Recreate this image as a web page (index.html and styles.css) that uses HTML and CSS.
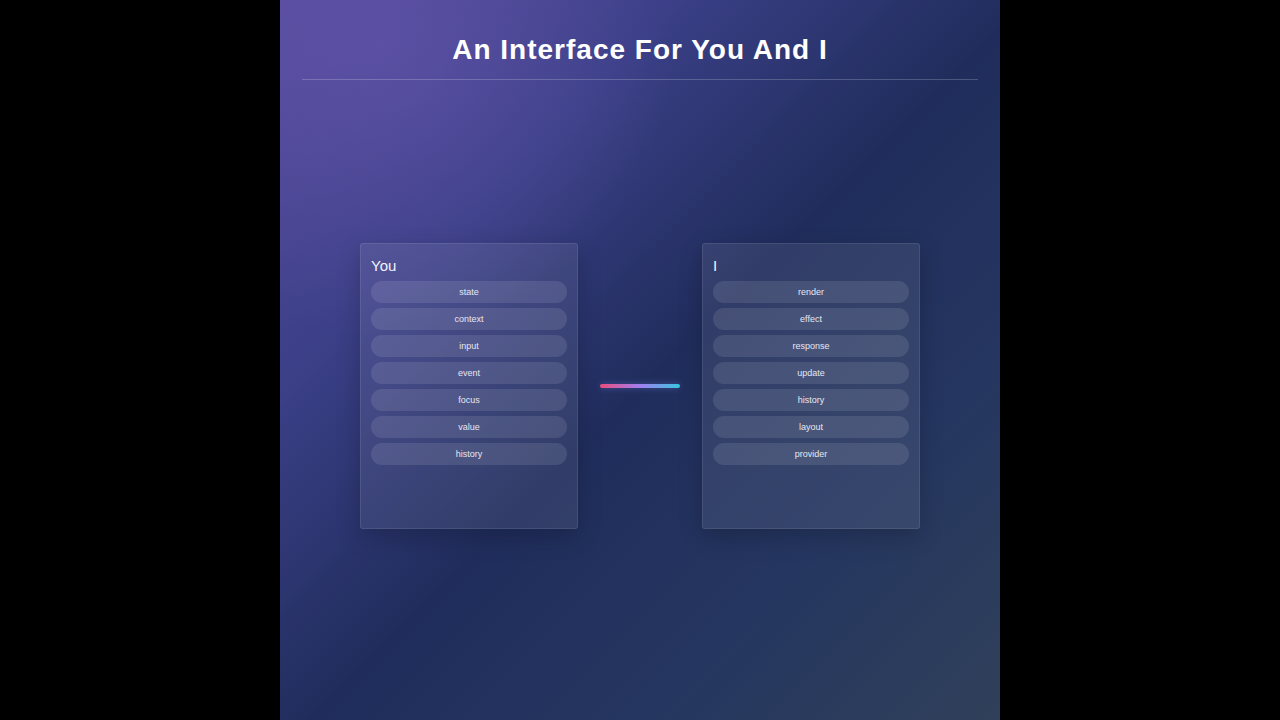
FILE: index.html
```html
<!DOCTYPE html>
<html lang="en">
<head>
  <meta charset="UTF-8">
  <title>An Interface For You And I</title>
  <link rel="stylesheet" href="styles.css">
</head>
<body>

<div class="app">
  <header class="header">
    <h1>An Interface For You And I</h1>
  </header>

  <main class="stage">
    <!-- Panel del usuario -->
    <section class="card">
      <h2 class="card-title">You</h2>
      <ul class="pills">
        <li>state</li>
        <li>context</li>
        <li>input</li>
        <li>event</li>
        <li>focus</li>
        <li>value</li>
        <li>history</li>
      </ul>
    </section>

    <div class="link"></div>

    <!-- Panel del sistema -->
    <section class="card">
      <h2 class="card-title">I</h2>
      <ul class="pills">
        <li>render</li>
        <li>effect</li>
        <li>response</li>
        <li>update</li>
        <li>history</li>
        <li>layout</li>
        <li>provider</li>
      </ul>
    </section>
  </main>
</div>

</body>
</html>
```

FILE: styles.css
```css
body {
  margin: 0;
  background-color: #000;
  font-family: "Liberation Sans", Arial, sans-serif;
  display: flex;
  justify-content: center;
}

.app {
  width: 720px;
  height: 720px;
  display: flex;
  flex-direction: column;
  color: #fff;
  background:
    radial-gradient(circle at 14% 6%, rgba(104, 88, 176, 0.55) 0, rgba(104, 88, 176, 0) 32%),
    linear-gradient(135deg, #554a9c 0%, #3a3f86 28%, #202d5c 52%, #253660 75%, #30405a 100%);
}

.header {
  margin: 0 22px;
  padding: 34px 0 13px;
  border-bottom: 1px solid rgba(255, 255, 255, 0.2);
  text-align: center;
}

.header h1 {
  margin: 0;
  font-size: 28px;
  line-height: 32px;
  letter-spacing: 1px;
  font-weight: bold;
}

.stage {
  flex: 1;
  display: flex;
  align-items: center;
  justify-content: center;
  gap: 22px;
  padding-bottom: 29px;
}

.card {
  width: 218px;
  height: 286px;
  box-sizing: border-box;
  padding: 13px 10px;
  background-color: rgba(255, 255, 255, 0.08);
  border: 1px solid rgba(255, 255, 255, 0.09);
  border-radius: 3px;
  box-shadow: 0 8px 24px rgba(0, 0, 0, 0.2);
}

.card-title {
  margin: 0 0 7px;
  font-size: 15px;
  line-height: 17px;
  font-weight: normal;
  color: #f2f2fa;
}

.pills {
  list-style: none;
  margin: 0;
  padding: 0;
  display: flex;
  flex-direction: column;
  gap: 5px;
}

.pills li {
  height: 22px;
  line-height: 22px;
  border-radius: 11px;
  background-color: rgba(255, 255, 255, 0.1);
  text-align: center;
  font-size: 9px;
  color: #e6e6f2;
}

/* Línea que une los dos paneles */
.link {
  width: 80px;
  height: 4px;
  border-radius: 2px;
  background: linear-gradient(90deg, #ec4d7c 0%, #a07ff0 50%, #38c6e0 100%);
  box-shadow: 0 0 6px rgba(120, 140, 240, 0.4);
}
```
